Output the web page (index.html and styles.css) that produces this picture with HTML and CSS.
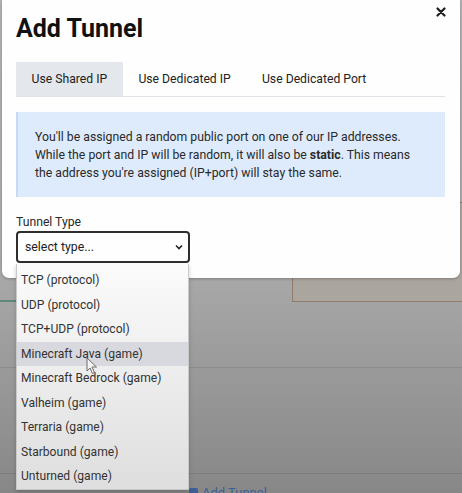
FILE: index.html
```html
<!DOCTYPE html>
<html>
<head>
<meta charset="utf-8">
<link rel="stylesheet" href="styles.css">
</head>
<body>
<div class="page">
  <div class="page-top">
    <div class="tan-panel"></div>
  </div>
  <div class="green-line"></div>
  <div class="rule rule-a"></div>
  <div class="rule rule-b"></div>
  <div class="add-link">
    <svg class="add-icon" width="10" height="12" viewBox="0 0 10 12"><rect x="0" y="1" width="9" height="11" rx="1.5" fill="#3d5f94"/></svg>
    <span>Add Tunnel</span>
  </div>
</div>

<div class="modal">
  <button class="close" aria-label="close">
    <svg width="10" height="10" viewBox="0 0 10 10"><path d="M1.5 1.5 L8.5 8.5 M8.5 1.5 L1.5 8.5" stroke="#1e1e1e" stroke-width="2.2" stroke-linecap="round"/></svg>
  </button>
  <h1 class="title">Add Tunnel</h1>
  <div class="tabs">
    <div class="tab active">Use Shared IP</div>
    <div class="tab">Use Dedicated IP</div>
    <div class="tab">Use Dedicated Port</div>
  </div>
  <div class="info">You'll be assigned a random public port on one of our IP addresses. While the port and IP will be random, it will also be <b>static</b>. This means the address you're assigned (IP+port) will stay the same.</div>
  <div class="label">Tunnel Type</div>
  <div class="select">
    <span>select type...</span>
    <svg class="chev" width="8" height="6" viewBox="0 0 8 6"><path d="M1 1.5 L4 4.5 L7 1.5" fill="none" stroke="#222" stroke-width="1.6"/></svg>
  </div>
</div>

<ul class="dropdown">
  <li>TCP (protocol)</li>
  <li>UDP (protocol)</li>
  <li>TCP+UDP (protocol)</li>
  <li class="hover">Minecraft Java (game)</li>
  <li>Minecraft Bedrock (game)</li>
  <li>Valheim (game)</li>
  <li>Terraria (game)</li>
  <li>Starbound (game)</li>
  <li>Unturned (game)</li>
</ul>

<svg class="cursor" width="12" height="18" viewBox="0 0 12 18"><path d="M1 1 L1 14 L4 11 L6.5 16.5 L8.5 15.5 L6 10 L10.5 10 Z" fill="#f4f4f4" stroke="#6a6a6a" stroke-width="1"/></svg>
</body>
</html>
```

FILE: styles.css
```css
html, body {
  margin: 0;
  padding: 0;
}
body {
  width: 462px;
  height: 493px;
  overflow: hidden;
  position: relative;
  font-family: Roboto, "Liberation Sans", Arial, sans-serif;
  color: #2a2a2a;
}
.page {
  height: 493px;
  background: linear-gradient(#b3b3b3 0%, #a9a9a9 55%, #878787 100%);
  overflow: hidden;
}
.page-top {
  height: 302px;
  display: flex;
  justify-content: flex-end;
  align-items: flex-end;
}
.tan-panel {
  width: 180px;
  height: 100px;
  margin-right: -10px;
  background: #aba59f;
  border: 1px solid #8f7c6b;
  box-sizing: border-box;
}
.green-line {
  width: 40px;
  height: 2px;
  margin-top: -2px;
  background: #5f8878;
}
.rule {
  height: 1px;
  background: #8c8c8c;
}
.rule-a {
  margin-top: 65px;
}
.rule-b {
  margin-top: 105px;
  background: #7b7d80;
}
.add-link {
  display: flex;
  align-items: flex-start;
  gap: 3px;
  margin-left: 189px;
  margin-top: 11px;
  font-size: 13px;
  color: #3d5f94;
  line-height: 16px;
}
.add-icon {
  margin-top: 2px;
}
.modal {
  position: absolute;
  left: 2px;
  top: 0;
  width: 458px;
  box-sizing: border-box;
  padding: 14px 15px 15px 14px;
  background: #fefefe;
  border-radius: 0 0 7px 7px;
  box-shadow: 0 1px 3px rgba(0,0,0,0.25);
}
.close {
  position: absolute;
  right: 14px;
  top: 7px;
  width: 10px;
  height: 10px;
  padding: 0;
  border: 0;
  background: none;
  display: flex;
}
.title {
  margin: 0;
  font-size: 25px;
  line-height: 30px;
  font-weight: 700;
  color: #111;
}
.tabs {
  display: flex;
  margin-top: 18px;
  border-bottom: 1px solid #dfe3e8;
}
.tab {
  padding: 0 15.6px;
  height: 34px;
  line-height: 35px;
  font-size: 12.2px;
  color: #222;
}
.tab.active {
  background: #e4e7eb;
}
.info {
  margin-top: 15px;
  background: #deebfc;
  border-left: 2px solid #c6d9f4;
  padding: 16px 16px 15px 17px;
  font-size: 12.25px;
  line-height: 18px;
  color: #2a2a2a;
}
.info b {
  font-weight: 700;
}
.label {
  margin-top: 16px;
  font-size: 12.2px;
  line-height: 18px;
  color: #2a2a2a;
}
.select {
  width: 174px;
  height: 32px;
  box-sizing: border-box;
  border: 2px solid #2e2e2e;
  border-radius: 4px;
  display: flex;
  align-items: center;
  justify-content: space-between;
  padding: 0 5px 0 7px;
  font-size: 12.3px;
  color: #222;
}
.dropdown {
  position: absolute;
  left: 16px;
  top: 264px;
  width: 173px;
  height: 226px;
  margin: 0;
  padding: 4px 0 0;
  list-style: none;
  box-sizing: border-box;
  background: linear-gradient(#fbfbfb, #dedede);
  border: 1px solid #c9c9c9;
  border-top: 0;
  box-shadow: 0 2px 4px rgba(0,0,0,0.2);
}
.dropdown li {
  height: 24.5px;
  line-height: 24.5px;
  padding-left: 4px;
  font-size: 12.1px;
  color: #333;
  white-space: nowrap;
}
.dropdown li.hover {
  background: #d8d8df;
}
.cursor {
  position: absolute;
  left: 86px;
  top: 357px;
}
```
